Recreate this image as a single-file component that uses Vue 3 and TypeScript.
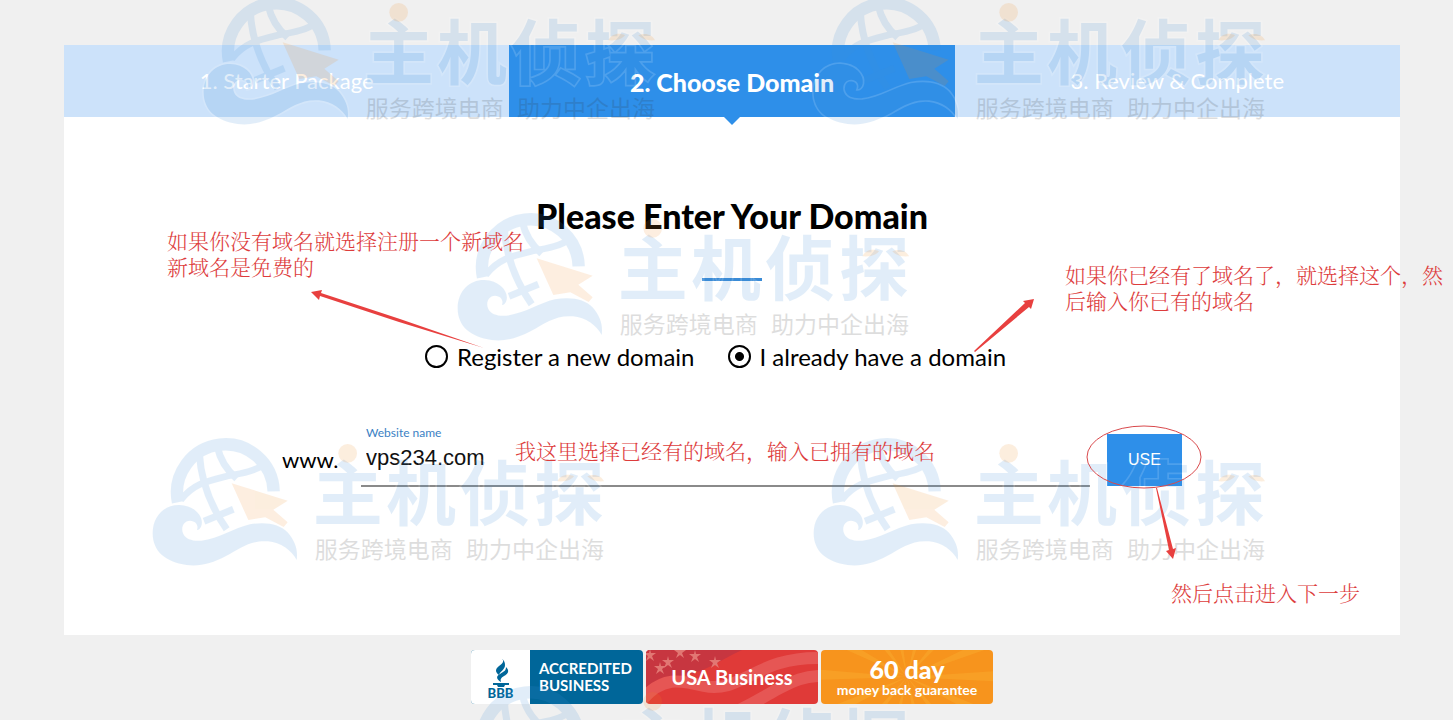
<script setup lang="ts">
import { ref } from 'vue'

interface Step { label: string; active: boolean }
interface Mark { id: string; cls: string }

const steps: Step[] = [
  { label: '1. Starter Package', active: false },
  { label: '2. Choose Domain', active: true },
  { label: '3. Review & Complete', active: false },
]

const marks: Mark[] = [
  { id: 'a', cls: 'mark-a' },
  { id: 'b', cls: 'mark-b' },
  { id: 'c', cls: 'mark-c' },
  { id: 'd', cls: 'mark-d' },
  { id: 'e', cls: 'mark-e' },
  { id: 'f', cls: 'mark-f' },
]

const rays: number[] = Array.from({ length: 14 }, (_, i) => i * 26)

const mode = ref<'new' | 'existing'>('existing')
const domain = ref('vps234.com')
</script>

<template>
  <div class="page">
    <main class="card">
      <nav class="steps" aria-label="Progress">
        <div v-for="s in steps" :key="s.label" class="step" :class="{ active: s.active }">{{ s.label }}</div>
      </nav>

      <h1 class="title">Please Enter Your Domain</h1>
      <div class="rule"></div>

      <form @submit.prevent>
        <div class="choices">
          <label class="choice"><input v-model="mode" type="radio" name="mode" value="new" />Register a new domain</label>
          <label class="choice"><input v-model="mode" type="radio" name="mode" value="existing" />I already have a domain</label>
        </div>

        <div class="entry">
          <span class="prefix">www.</span>
          <div class="field">
            <label for="site">Website name</label>
            <input id="site" v-model="domain" type="text" />
          </div>
          <button type="submit" class="use">USE</button>
        </div>
      </form>
    </main>

    <footer class="badges">
      <div class="badge bbb">
        <div class="bbb-logo">
          <svg width="28" height="29" viewBox="0 0 28 29" aria-hidden="true">
            <path d="M14 0C18 3 16 5 12 8C8 11 8 14 12 17C13 13 18 12 18 7C18 4 17 2 14 0Z" />
            <path d="M19 9C23 13 21 16 17 18C14 20 13 21 14 24C9 21 9 18 13 16C17 13 19 13 19 9Z" />
            <path d="M6 25H22V27H18L17 29H11L10 27H6Z" />
          </svg>
          <span>BBB</span>
        </div>
        <div class="bbb-text">ACCREDITED<br />BUSINESS</div>
      </div>

      <div class="badge usa">
        <svg class="art" viewBox="0 0 172 54" preserveAspectRatio="none" aria-hidden="true">
          <path d="M0 0H96C74 10 62 20 44 24C26 26 12 34 0 46Z" fill="#c73640" />
          <g fill="none" stroke="#e65654" stroke-width="12">
            <path d="M-4 50C16 26 34 30 58 36C96 44 110 6 176 8" />
            <path d="M84 64C104 56 112 50 130 40C146 32 156 26 176 26" />
          </g>
          <g fill="#e27773">
            <path v-for="(p, i) in [[4, 5], [34, 2], [22, 12], [49, 6], [69, 12], [14, 18]]" :key="i" :transform="`translate(${p[0]} ${p[1]})`" d="M0 -6L1 -2L6 -2L2 1L4 6L0 3L-4 6L-2 1L-6 -2L-1 -2Z" />
          </g>
        </svg>
        <span>USA Business</span>
      </div>

      <div class="badge money">
        <svg class="art" viewBox="0 0 172 54" preserveAspectRatio="none" aria-hidden="true">
          <path v-for="r in rays" :key="r" :transform="`rotate(${r} 86 27)`" d="M86 27L190 20V32Z" fill="#f9a72b" opacity=".55" />
        </svg>
        <strong>60 day</strong>
        <span>money back guarantee</span>
      </div>
    </footer>

    <svg v-for="m in marks" :key="m.id" class="mark" :class="m.cls" width="454" height="128" viewBox="36 27 1362 384" aria-hidden="true">
      <g class="mark-blue">
        <g fill="none" stroke="#408fd8">
          <path stroke-width="37" d="M114 217A145 145 0 1 1 401 184" />
          <path stroke-width="20" d="M122 210C160 160 205 152 262 138C310 130 350 122 376 100" />
          <path stroke-width="21" d="M178 70C182 140 206 220 260 298" />
          <path stroke-width="21" d="M232 50C240 88 258 118 290 146" />
          <path stroke-width="21" d="M192 274L280 238" />
        </g>
        <path class="solid" d="M38 310C38 256 76 224 118 225C164 227 190 258 185 284C183 294 176 300 171 300C176 286 168 273 150 272C128 273 122 296 130 312C138 328 158 334 184 332C238 326 282 294 330 283C376 274 420 282 444 308C466 334 474 360 470 390C454 360 422 338 384 334C330 330 300 356 258 378C216 400 180 410 140 405C76 396 38 364 38 310Z" />
        <text class="solid brand" x="518 738 960 1182" y="270">主机侦探</text>
      </g>
      <g class="mark-orange">
        <path d="M275 160L443 212L400 239L443 277L431 291L376 262L325 270Z" />
        <circle cx="623" cy="70" r="28" />
        <path d="M1252 154C1262 134 1284 130 1302 139C1292 152 1272 156 1252 154Z" />
        <path d="M1342 139C1362 130 1384 136 1392 154C1372 156 1354 152 1342 139Z" />
      </g>
      <g class="mark-gray">
        <text x="524" y="383">服务跨境电商</text>
        <text x="978" y="383">助力中企出海</text>
      </g>
    </svg>

    <p class="note note-new">如果你没有域名就选择注册一个新域名<br />新域名是免费的</p>
    <p class="note note-own">如果你已经有了域名了，就选择这个，然<br />后输入你已有的域名</p>
    <p class="note note-field">我这里选择已经有的域名，输入已拥有的域名</p>
    <p class="note note-next">然后点击进入下一步</p>

    <svg class="arrows" width="1453" height="720" viewBox="0 0 1453 720" aria-hidden="true">
      <g fill="#e8403f">
        <path d="M311 292L322 290L321 293L400 319L484 348L399 322L320 296L319 300Z" />
        <path d="M1034 299L1031 309L1029 307L975 352L974 351L1025 303L1023 301Z" />
        <path d="M1173 559L1166 551L1169 550L1156 488L1157 488L1173 549L1176 548Z" />
      </g>
      <ellipse cx="1144" cy="457" rx="57" ry="31" fill="none" stroke="#d9494c" />
    </svg>
  </div>
</template>

<style>
body {
  margin: 0;
  background: #f0f0f0;
}
</style>

<style scoped>
.page {
  position: relative;
  overflow: hidden;
  padding: 45px 53px 16px 64px;
  background: #f0f0f0;
  color: #000;
  font-family: Lato, "Noto Sans CJK SC", sans-serif;
}
.card {
  background: #fff;
  padding-bottom: 148px;
}
.steps {
  display: grid;
  grid-template-columns: repeat(3, 1fr);
}
.step {
  position: relative;
  height: 72px;
  line-height: 72px;
  text-align: center;
  font-size: 22px;
  color: #fff;
  background: #cce2fa;
}
.step.active {
  background: #2e8fe9;
  font-size: 25px;
  line-height: 74px;
  font-weight: 900;
}
.step.active::after {
  content: "";
  position: absolute;
  left: 50%;
  top: 100%;
  margin-left: -8px;
  border: 8px solid transparent;
  border-top-color: #2e8fe9;
  border-bottom: 0;
}
.title {
  margin: 79px 0 0;
  text-align: center;
  font-size: 34px;
  line-height: 40px;
  font-weight: 900;
}
.rule {
  width: 60px;
  height: 3px;
  margin: 42px auto 0;
  background: #3a8bd6;
}
.choices {
  display: flex;
  justify-content: center;
  margin-top: 60px;
}
.choice {
  display: flex;
  align-items: center;
  gap: 9px;
  height: 30px;
  margin-right: 33px;
  font-size: 24px;
}
.choice input {
  appearance: none;
  width: 23px;
  height: 23px;
  margin: 0;
  border: 2px solid #000;
  border-radius: 50%;
}
.choice input:checked {
  background: radial-gradient(circle, #000 4px, transparent 5px);
}
.entry {
  display: flex;
  width: 900px;
  max-width: 100%;
  margin: 54px auto 0;
}
.prefix {
  width: 79px;
  padding-top: 21px;
  font-size: 22px;
  line-height: 28px;
}
.field {
  flex: 1;
  margin-right: 17px;
  border-bottom: 2px solid #8a8a8a;
}
.field label {
  display: block;
  padding-left: 5px;
  font-size: 12px;
  line-height: 16px;
  color: #3b7fc4;
}
.field input {
  display: block;
  box-sizing: border-box;
  width: 100%;
  height: 44px;
  padding: 0 5px 10px;
  border: 0;
  outline: 0;
  background: transparent;
  font: 22px "Liberation Sans", Arial, sans-serif;
  color: #111;
}
.use {
  align-self: flex-end;
  width: 75px;
  height: 52px;
  margin-bottom: 1px;
  padding: 0;
  border: 0;
  background: #2e8fe9;
  color: #fff;
  font: 16px "Liberation Sans", Arial, sans-serif;
}
.badges {
  display: flex;
  justify-content: center;
  gap: 3px;
  margin-top: 15px;
}
.badge {
  position: relative;
  display: flex;
  width: 172px;
  height: 54px;
  overflow: hidden;
  border-radius: 4px;
  color: #fff;
  font-weight: 700;
}
.badge span,
.badge strong {
  position: relative;
}
.bbb {
  background: #006699;
}
.bbb-logo {
  display: flex;
  flex-direction: column;
  align-items: center;
  width: 59px;
  padding-top: 8px;
  box-sizing: border-box;
  background: #fff;
  color: #006699;
  fill: #006699;
  font-size: 13px;
  line-height: 12px;
  font-weight: 900;
}
.bbb-text {
  padding: 10px 0 0 9px;
  font-size: 15px;
  line-height: 17px;
}
.usa {
  align-items: center;
  justify-content: center;
  background: #e03a38;
  font-size: 20px;
}
.money {
  flex-direction: column;
  align-items: center;
  justify-content: center;
  background: #f7941d;
  font-size: 14px;
  line-height: 16px;
}
.money strong {
  font-size: 25px;
  line-height: 26px;
}
.art {
  position: absolute;
  inset: 0;
  width: 100%;
  height: 100%;
}
.mark,
.arrows {
  position: absolute;
  pointer-events: none;
  overflow: visible;
}
.mark-a { left: 203px; top: -2px; }
.mark-b { left: 813px; top: -2px; }
.mark-c { left: 457px; top: 214px; }
.mark-d { left: 152px; top: 439px; }
.mark-e { left: 813px; top: 439px; }
.mark-f { left: 457px; top: 687px; }
.mark-blue {
  opacity: 0.15;
}
.mark-blue .solid {
  fill: #408fd8;
  stroke: #fff;
  stroke-width: 10px;
  paint-order: stroke;
}
.mark-blue .brand {
  font: 700 210px "Noto Sans CJK SC", sans-serif;
}
.mark-orange {
  fill: #f08a20;
  opacity: 0.14;
}
.mark-gray {
  fill: #333;
  opacity: 0.16;
  font: 69px "Noto Sans CJK SC", sans-serif;
}
.arrows {
  left: 0;
  top: 0;
}
.note {
  position: absolute;
  margin: 0;
  white-space: nowrap;
  font: 300 21px/26px "Noto Serif CJK SC", "Noto Sans CJK SC", serif;
  color: #dd3c3c;
  pointer-events: none;
}
.note-new { left: 167px; top: 227px; }
.note-own { left: 1065px; top: 261px; }
.note-field { left: 515px; top: 437px; }
.note-next { left: 1171px; top: 579px; }
</style>
